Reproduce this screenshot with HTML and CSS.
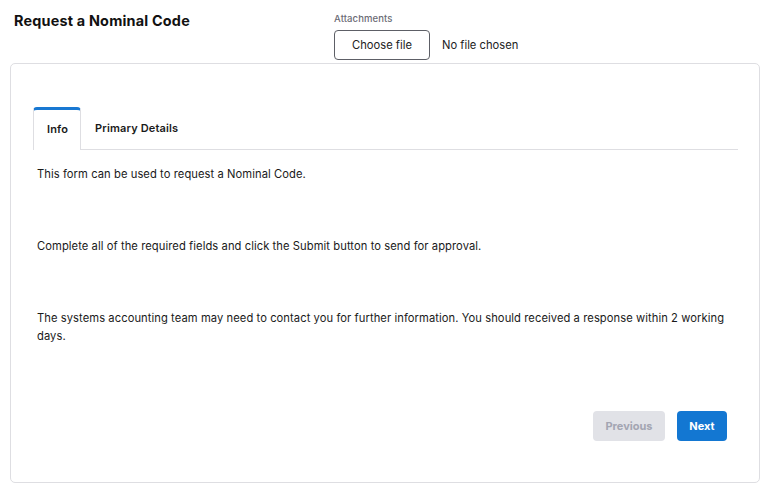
FILE: index.html
```html
<!DOCTYPE html>
<html>
<head>
<meta charset="utf-8">
<link rel="stylesheet" href="styles.css">
</head>
<body>
<div class="page">
  <header class="top">
    <h1 class="title">Request a Nominal Code</h1>
    <div class="attach">
      <div class="attach-label">Attachments</div>
      <div class="file-row">
        <button class="file-btn">Choose file</button>
        <span class="file-none">No file chosen</span>
      </div>
    </div>
  </header>
  <section class="card">
    <nav class="tabs">
      <div class="tab active">Info</div>
      <div class="tab">Primary Details</div>
    </nav>
    <div class="content">
      <p class="para">This form can be used to request a Nominal Code.</p>
      <p class="para">Complete all of the required fields and click the Submit button to send for approval.</p>
      <p class="para">The systems accounting team may need to contact you for further information. You should received a response within 2 working days.</p>
    </div>
    <div class="actions">
      <button class="btn btn-prev">Previous</button>
      <button class="btn btn-next">Next</button>
    </div>
  </section>
</div>
</body>
</html>
```
FILE: styles.css
```css
* { box-sizing: border-box; }
html, body { margin: 0; padding: 0; background: #fff; }
body {
  font-family: Inter, "Open Sans", "Liberation Sans", sans-serif;
  color: #1c1c1c;
  width: 776px;
  height: 495px;
  overflow: hidden;
}
.page { padding: 0 16px 0 10px; }
.top {
  display: flex;
  align-items: flex-start;
  height: 63px;
}
.title {
  margin: 12px 0 0 4px;
  font-size: 14.4px;
  font-weight: 700;
  width: 320px;
  color: #111;
  letter-spacing: 0.2px;
}
.attach { margin-top: 13px; }
.attach-label {
  font-size: 9.5px;
  color: #6b6b75;
  font-weight: 500;
  margin-bottom: 6px;
  letter-spacing: 0.1px;
}
.file-row { display: flex; align-items: center; }
.file-btn {
  width: 96px;
  height: 30px;
  border: 1px solid #5d5f66;
  border-radius: 4px;
  background: #fff;
  font-family: inherit;
  font-size: 11.2px;
  color: #222;
  padding: 0;
}
.file-none { margin-left: 12px; font-size: 11.2px; color: #222; }
.card {
  border: 1px solid #dedee2;
  border-radius: 5px;
  height: 420px;
  padding: 43px 21px 0 22px;
  display: flex;
  flex-direction: column;
}
.tabs {
  display: flex;
  border-bottom: 1px solid #dedee2;
  height: 43px;
}
.tab {
  font-size: 11px;
  font-weight: 600;
  padding: 0 13px 3px 13px;
  display: flex;
  align-items: center;
  color: #1a1a1a;
  border: 1px solid transparent;
  border-top-width: 3px;
  letter-spacing: 0.15px;
}
.tab.active {
  padding: 0 12px 3px 13px;
  border-color: #dedee2;
  border-top-color: #1878d2;
  border-bottom: none;
  border-radius: 4px 4px 0 0;
  background: #fff;
  margin-bottom: -1px;
}
.content { padding: 15px 4px 0 4px; }
.para {
  margin: 0 0 54px 0;
  font-size: 11.2px;
  letter-spacing: 0.07px;
  line-height: 18px;
  color: #1a1a1a;
}
.para:last-child { margin-bottom: 0; }
.actions {
  margin-top: auto;
  margin-bottom: 41px;
  display: flex;
  justify-content: flex-end;
  gap: 12px;
  padding-right: 11px;
}
.btn {
  height: 30px;
  border: none;
  border-radius: 4px;
  font-family: inherit;
  font-size: 11px;
  font-weight: 700;
  padding: 0;
}
.btn-prev { width: 72px; background: #e1e2e7; color: #a3a5b2; }
.btn-next { width: 50px; background: #1377d2; color: #fff; }
```
